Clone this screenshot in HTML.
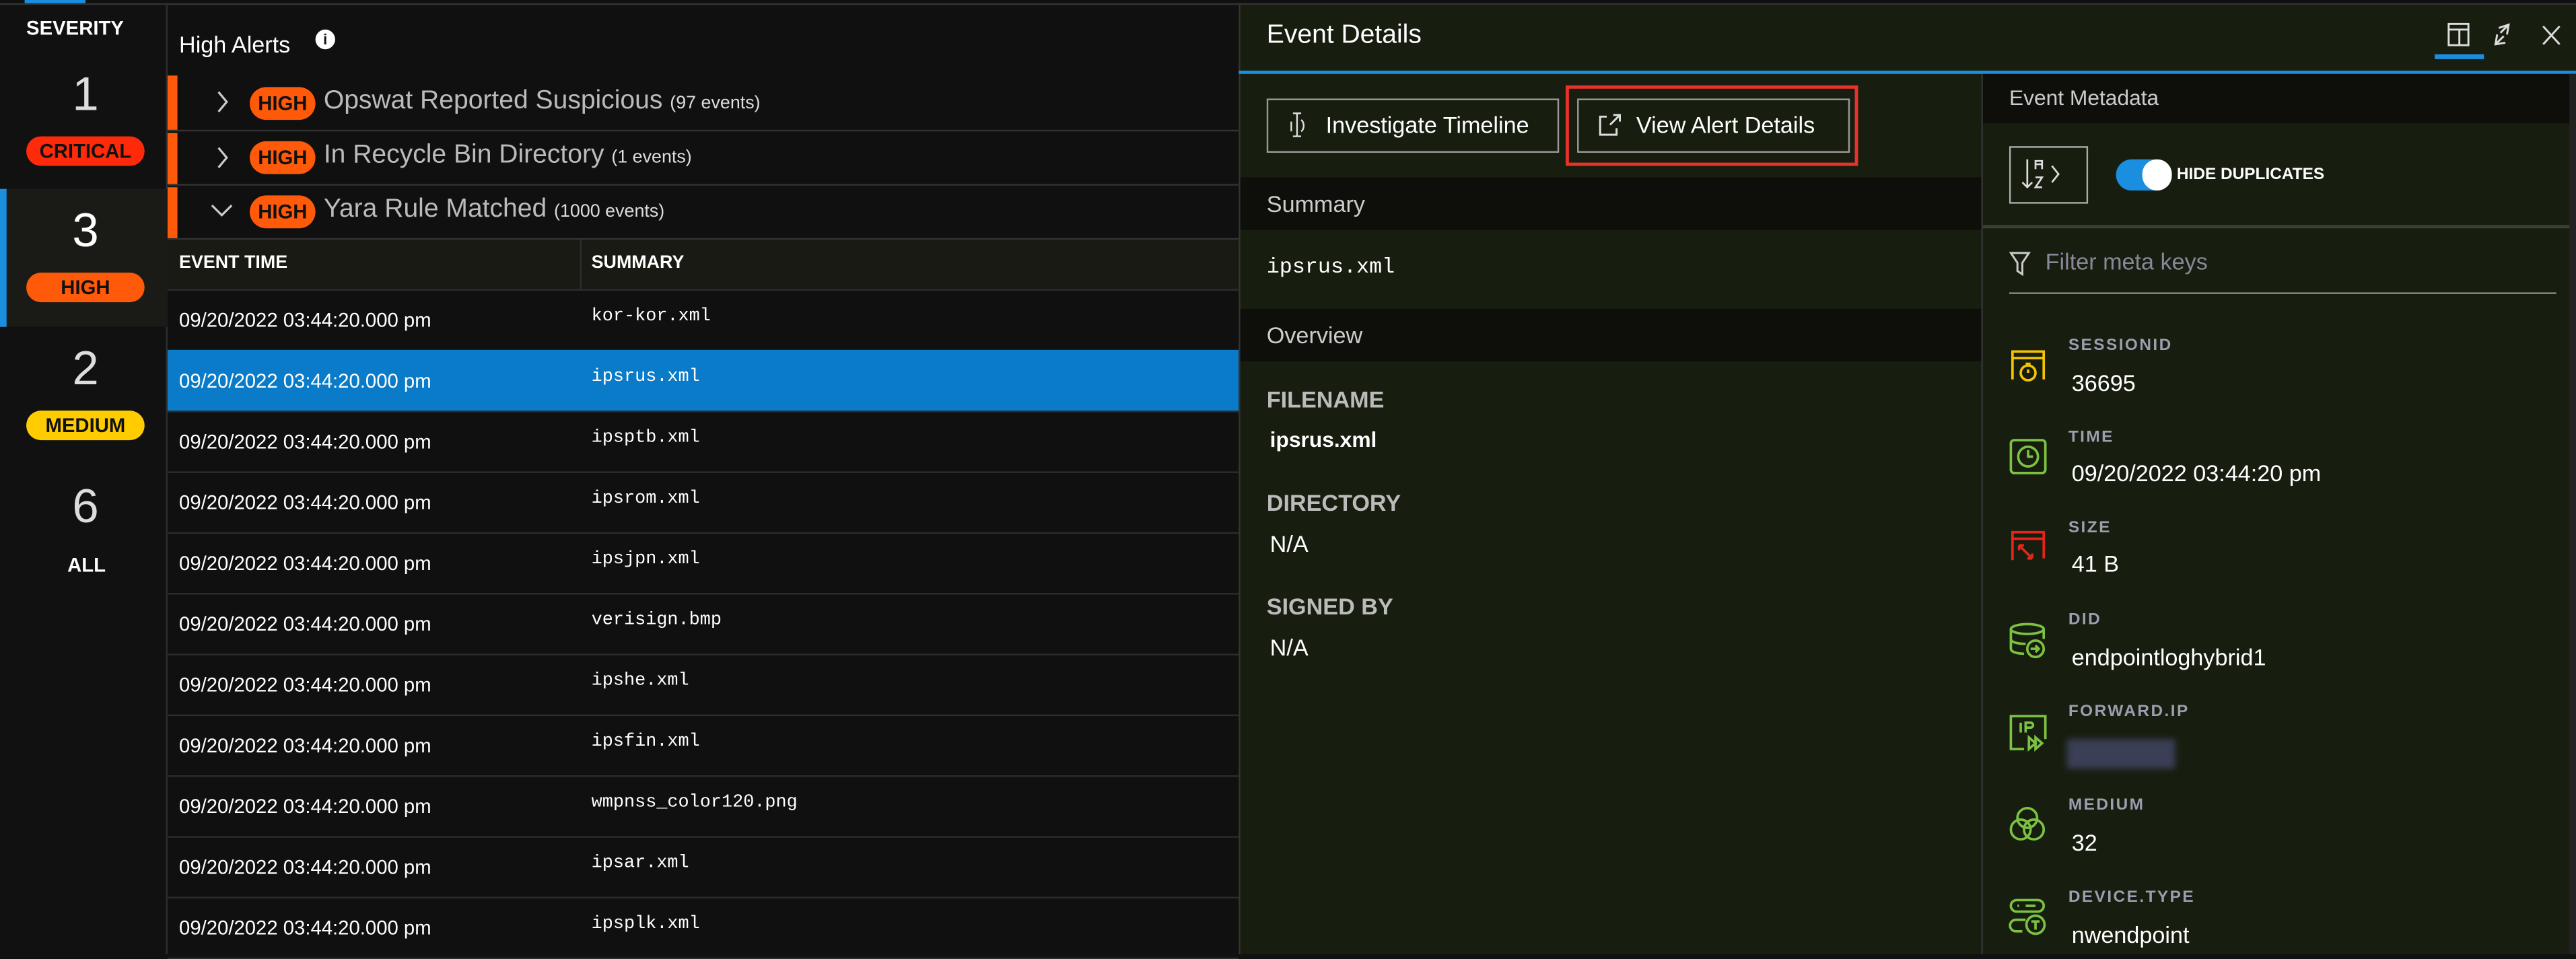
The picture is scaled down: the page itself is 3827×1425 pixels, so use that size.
<!DOCTYPE html>
<html><head><meta charset="utf-8"><style>
html,body{margin:0;padding:0;background:#111;overflow:hidden}
#w{position:absolute;left:0;top:0;width:1568px;height:581px;transform:scale(2.44069,2.4406);transform-origin:0 0;font-family:"Liberation Sans",sans-serif;color:#fff;background:#101010}
.a{position:absolute;white-space:nowrap}
.pill{position:absolute;border-radius:9px;font-weight:bold;font-size:12px;text-align:center;line-height:18px}
.hp{position:absolute;left:152px;width:40px;height:20px;border-radius:10px;background:#ff5a0a;color:#111;font-weight:bold;font-size:12px;text-align:center;line-height:20px}
.row{position:absolute;left:102px;width:652px;height:37px;border-bottom:1px solid #2c2c2c;font-size:12px}
.row .t{position:absolute;left:7px;top:12px}
.row .s{position:absolute;left:258px;top:11px;font-family:"Liberation Mono",monospace;font-size:11px}
.lab{position:absolute;left:1259px;font-size:10px;font-weight:bold;color:#9a9eae;letter-spacing:1px}
.val{position:absolute;left:1261px;font-size:14px;color:#fff}
.ic{position:absolute;left:1222px;width:24px;height:24px}
</style></head><body><div id="w">
<div class="a" style="left:15px;top:0;width:37px;height:2px;background:#1a8fe0"></div>
<div class="a" style="left:0;top:2px;width:1568px;height:1px;background:#333"></div>
<!-- severity -->
<div class="a" style="left:0;top:3px;width:102px;height:578px;background:#111"></div>
<div class="a" style="left:101px;top:3px;width:1px;height:578px;background:#2e2e2e"></div>
<div class="a" style="left:16px;top:10px;font-size:12px;font-weight:bold">SEVERITY</div>
<div class="a" style="left:44px;top:42px;font-size:29px;color:#ddd">1</div>
<div class="pill" style="left:16px;top:83px;width:72px;background:#ff2a0a;color:#111">CRITICAL</div>
<div class="a" style="left:0;top:115px;width:102px;height:84px;background:#1a1a16"></div>
<div class="a" style="left:0;top:115px;width:4px;height:84px;background:#1a8fe0"></div>
<div class="a" style="left:44px;top:125px;font-size:29px">3</div>
<div class="pill" style="left:16px;top:166px;width:72px;background:#ff5a0a;color:#111">HIGH</div>
<div class="a" style="left:44px;top:209px;font-size:29px;color:#ddd">2</div>
<div class="pill" style="left:16px;top:250px;width:72px;background:#ffcc00;color:#111">MEDIUM</div>
<div class="a" style="left:44px;top:293px;font-size:29px;color:#ddd">6</div>
<div class="a" style="left:41px;top:337px;font-size:12px;font-weight:bold">ALL</div>
<!-- middle -->
<div class="a" style="left:109px;top:19px;font-size:14px">High Alerts</div>
<div class="a" style="left:192px;top:18px;width:12px;height:12px;border-radius:6px;background:#fff;color:#111;font-size:9px;font-weight:bold;text-align:center;line-height:12px">i</div>
<div class="a" style="left:102px;top:45px;width:652px;height:34px;border-bottom:1px solid #333"></div>
<div class="a" style="left:102px;top:80px;width:652px;height:32px;border-bottom:1px solid #333"></div>
<div class="a" style="left:102px;top:113px;width:652px;height:32px;border-bottom:1px solid #333"></div>
<div class="a" style="left:102px;top:46px;width:6px;height:33px;background:#ff5a0a"></div>
<div class="a" style="left:102px;top:81px;width:6px;height:31px;background:#ff5a0a"></div>
<div class="a" style="left:102px;top:114px;width:6px;height:31px;background:#ff5a0a"></div>
<svg class="a" style="left:128px;top:54px" width="14" height="80" fill="none" stroke="#ccc" stroke-width="1.3"><path d="M5 2l5 6-5 6M5 36l5 6-5 6M1 71l6 6 6-6"/></svg>
<div class="hp" style="top:53px">HIGH</div><div class="a" style="left:197px;top:53px;font-size:16px;color:#bbb">Opswat Reported Suspicious <span style="font-size:11px;color:#ddd">(97 events)</span></div>
<div class="hp" style="top:86px">HIGH</div><div class="a" style="left:197px;top:86px;font-size:16px;color:#bbb">In Recycle Bin Directory <span style="font-size:11px;color:#ddd">(1 events)</span></div>
<div class="hp" style="top:119px">HIGH</div><div class="a" style="left:197px;top:119px;font-size:16px;color:#bbb">Yara Rule Matched <span style="font-size:11px;color:#ddd">(1000 events)</span></div>
<div class="a" style="left:102px;top:146px;width:652px;height:30px;background:#1a1a14;border-bottom:1px solid #2c2c2c"></div>
<div class="a" style="left:353px;top:146px;width:1px;height:30px;background:#2c2c2c"></div>
<div class="a" style="left:109px;top:154px;font-size:11px;font-weight:bold">EVENT TIME</div>
<div class="a" style="left:360px;top:154px;font-size:11px;font-weight:bold">SUMMARY</div>
<div class="row" style="top:176px"><span class="t">09/20/2022 03:44:20.000 pm</span><span class="s">kor-kor.xml</span></div>
<div class="row" style="top:213px;background:#0a7bc8"><span class="t">09/20/2022 03:44:20.000 pm</span><span class="s">ipsrus.xml</span></div>
<div class="row" style="top:250px"><span class="t">09/20/2022 03:44:20.000 pm</span><span class="s">ipsptb.xml</span></div>
<div class="row" style="top:287px"><span class="t">09/20/2022 03:44:20.000 pm</span><span class="s">ipsrom.xml</span></div>
<div class="row" style="top:324px"><span class="t">09/20/2022 03:44:20.000 pm</span><span class="s">ipsjpn.xml</span></div>
<div class="row" style="top:361px"><span class="t">09/20/2022 03:44:20.000 pm</span><span class="s">verisign.bmp</span></div>
<div class="row" style="top:398px"><span class="t">09/20/2022 03:44:20.000 pm</span><span class="s">ipshe.xml</span></div>
<div class="row" style="top:435px"><span class="t">09/20/2022 03:44:20.000 pm</span><span class="s">ipsfin.xml</span></div>
<div class="row" style="top:472px"><span class="t">09/20/2022 03:44:20.000 pm</span><span class="s">wmpnss_color120.png</span></div>
<div class="row" style="top:509px"><span class="t">09/20/2022 03:44:20.000 pm</span><span class="s">ipsar.xml</span></div>
<div class="row" style="top:546px"><span class="t">09/20/2022 03:44:20.000 pm</span><span class="s">ipsplk.xml</span></div>
<!-- right panel -->
<div class="a" style="left:754px;top:3px;width:814px;height:578px;background:#171d0f;border-left:1px solid #333"></div>
<div class="a" style="left:771px;top:13px;font-size:16px">Event Details</div>
<svg class="a" style="left:1488px;top:13px" width="80" height="22" fill="none" stroke="#ddd" stroke-width="1.2"><rect x="2.5" y="1.5" width="12" height="13"/><path d="M2.5 5h12M9 5v10M33 4l6-2-1 6M39 2l-5 5M32 8l-1 6 6-1M31 14l5-5M60 3l10 11M70 3L60 14"/></svg>
<div class="a" style="left:1482px;top:33px;width:30px;height:3px;background:#1a8fe0"></div>
<div class="a" style="left:754px;top:43px;width:814px;height:2px;background:#1a8fe0"></div>
<div class="a" style="left:771px;top:60px;width:176px;height:31px;border:1px solid #999"></div>
<svg class="a" style="left:784px;top:67px" width="12" height="18" fill="none" stroke="#ddd" stroke-width="1"><path d="M3 2h5M5.5 2v14M3 16h5M8 6a3 4 0 0 1 0 7M2 7v6"/></svg>
<div class="a" style="left:807px;top:68px;font-size:14px">Investigate Timeline</div>
<div class="a" style="left:953px;top:52px;width:178px;height:49px;border:2px solid #e8332a;box-sizing:border-box"></div>
<div class="a" style="left:960px;top:60px;width:164px;height:31px;border:1px solid #999"></div>
<svg class="a" style="left:972px;top:68px" width="16" height="16" fill="none" stroke="#ddd" stroke-width="1.2"><path d="M6 3H2v11h10v-4M8 8l6-6M10 2h4v4"/></svg>
<div class="a" style="left:996px;top:68px;font-size:14px">View Alert Details</div>
<div class="a" style="left:755px;top:108px;width:451px;height:32px;background:#0e0f0a"></div>
<div class="a" style="left:771px;top:116px;font-size:14px;color:#ccc">Summary</div>
<div class="a" style="left:771px;top:155px;font-family:'Liberation Mono',monospace;font-size:13px">ipsrus.xml</div>
<div class="a" style="left:755px;top:188px;width:451px;height:32px;background:#0e0f0a"></div>
<div class="a" style="left:771px;top:196px;font-size:14px;color:#ccc">Overview</div>
<div class="a" style="left:771px;top:235px;font-size:14px;font-weight:bold;color:#bbb">FILENAME</div>
<div class="a" style="left:773px;top:260px;font-size:13px;font-weight:bold">ipsrus.xml</div>
<div class="a" style="left:771px;top:298px;font-size:14px;font-weight:bold;color:#bbb">DIRECTORY</div>
<div class="a" style="left:773px;top:323px;font-size:14px">N/A</div>
<div class="a" style="left:771px;top:361px;font-size:14px;font-weight:bold;color:#bbb">SIGNED BY</div>
<div class="a" style="left:773px;top:386px;font-size:14px">N/A</div>
<!-- metadata -->
<div class="a" style="left:1206px;top:45px;width:1px;height:536px;background:#333"></div>
<div class="a" style="left:1207px;top:45px;width:361px;height:30px;background:#0e0f0a"></div>
<div class="a" style="left:1223px;top:52px;font-size:13px;color:#ccc">Event Metadata</div>
<div class="a" style="left:1223px;top:89px;width:46px;height:33px;border:1px solid #aaa"></div>
<svg class="a" style="left:1230px;top:95px" width="34" height="22" fill="none" stroke="#ddd" stroke-width="1.1"><path d="M4 2v17M1 16l3 3 3-3M9 8V3h4v5M9 5h4M9 13h4l-4 6h4M19 6l4 5-4 5"/></svg>
<div class="a" style="left:1288px;top:97px;width:33px;height:19px;border-radius:10px;background:#1a8fe0"></div>
<div class="a" style="left:1304px;top:97px;width:18px;height:19px;border-radius:10px;background:#fff"></div>
<div class="a" style="left:1325px;top:101px;font-size:10px;font-weight:bold">HIDE DUPLICATES</div>
<div class="a" style="left:1207px;top:137px;width:361px;height:2px;background:#3a3f38"></div>
<svg class="a" style="left:1223px;top:152px" width="14" height="16" fill="none" stroke="#ccc" stroke-width="1.2"><path d="M1 2h11L8 8v7L5 13V8z"/></svg>
<div class="a" style="left:1245px;top:151px;font-size:14px;color:#889">Filter meta keys</div>
<div class="a" style="left:1223px;top:178px;width:333px;height:1px;background:#888"></div>
<div class="lab" style="top:205px">SESSIONID</div><div class="val" style="top:225px">36695</div>
<div class="lab" style="top:261px">TIME</div><div class="val" style="top:280px">09/20/2022 03:44:20 pm</div>
<div class="lab" style="top:316px">SIZE</div><div class="val" style="top:335px">41 B</div>
<div class="lab" style="top:372px">DID</div><div class="val" style="top:392px">endpointloghybrid1</div>
<div class="lab" style="top:428px">FORWARD.IP</div>
<div class="a" style="left:1258px;top:450px;width:66px;height:18px;background:#3a3f55;filter:blur(2px)"></div>
<div class="lab" style="top:485px">MEDIUM</div><div class="val" style="top:505px">32</div>
<div class="lab" style="top:541px">DEVICE.TYPE</div><div class="val" style="top:561px">nwendpoint</div>
<svg class="ic" style="top:211px" viewBox="0 0 24 24" fill="none" stroke="#f5c400" stroke-width="1.5"><path d="M3 20V3h19v17M3 7h19"/><circle cx="12.5" cy="16" r="4.5"/><path d="M12.5 16v-2M11 10.5h3"/></svg>
<svg class="ic" style="top:266px" viewBox="0 0 24 24" fill="none" stroke="#7cc242" stroke-width="1.5"><rect x="2" y="2" width="21" height="20" rx="2"/><circle cx="12.5" cy="12" r="6"/><path d="M12.5 8v4h3"/></svg>
<svg class="ic" style="top:321px" viewBox="0 0 24 24" fill="none" stroke="#e8231a" stroke-width="1.5"><path d="M3 20V3h19v16M3 7h19M7 11l8 8M7 11h3M7 11v3M15 19h-3M15 19v-3"/></svg>
<svg class="ic" style="top:378px" viewBox="0 0 24 24" fill="none" stroke="#7cc242" stroke-width="1.5"><ellipse cx="12" cy="5" rx="10" ry="3"/><path d="M2 5v12c0 2 4 3 8 3M22 5v6M2 11c0 2 4 3 9 3"/><circle cx="17" cy="17" r="5"/><path d="M14 17h5M17 15l2 2-2 2"/></svg>
<svg class="ic" style="top:434px" viewBox="0 0 24 24" fill="none" stroke="#7cc242" stroke-width="1.5"><path d="M10 22H2V2h21v14M8 6v6M11 12V6h3a1.5 1.5 0 0 1 0 3h-3M13 15v7l4-3.5zM17 15v7l4-3.5z"/></svg>
<svg class="ic" style="top:490px" viewBox="0 0 24 24" fill="none" stroke="#7cc242" stroke-width="1.5"><circle cx="12" cy="8" r="6"/><circle cx="8" cy="15" r="6"/><circle cx="16" cy="15" r="6"/></svg>
<svg class="ic" style="top:546px" viewBox="0 0 24 24" fill="none" stroke="#7cc242" stroke-width="1.5"><rect x="2" y="2" width="20" height="7" rx="3.5"/><path d="M9 21H5a3 3 0 0 1 0-7h6M6 5.5h1M11 5.5h6"/><circle cx="17" cy="17" r="5.5"/><path d="M14.5 15h5M17 15v5"/></svg>
<div class="a" style="left:1564px;top:45px;width:4px;height:536px;background:#222"></div>
</div></body></html>
